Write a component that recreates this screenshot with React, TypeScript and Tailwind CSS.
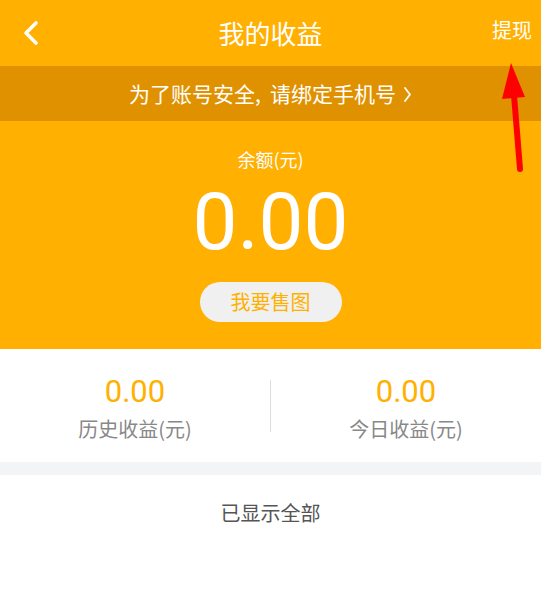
import React from "react";

export default function App() {
  const font = { fontFamily: '"Noto Sans CJK SC", Roboto, sans-serif' };
  return (
    <div className="relative w-[541px] h-[610px] bg-white overflow-hidden" style={font}>
      <div className="bg-[#FFB000]">
        <div className="relative h-[66px] flex items-center justify-center">
          <svg className="absolute left-[22px] top-[20px]" width="18" height="26" viewBox="0 0 18 26">
            <path d="M14 3 L4 13 L14 23" fill="none" stroke="white" strokeWidth="3.6" strokeLinecap="round" strokeLinejoin="round" />
          </svg>
          <div className="text-white text-[26px] leading-none">我的收益</div>
          <div className="absolute right-[9px] top-[20px] text-white text-[20px] leading-none">提现</div>
        </div>
        <div className="h-[55px] bg-[#E09100] flex items-center justify-center text-white text-[21px]">
          <span>为了账号安全</span>
          <span className="mr-[9px]">,</span>
          <span>请绑定手机号</span>
          <svg className="ml-[7px] mt-[2px]" width="9" height="17" viewBox="0 0 9 17">
            <path d="M2 2 L7 8.5 L2 15" fill="none" stroke="white" strokeWidth="1.8" strokeLinecap="round" strokeLinejoin="round" />
          </svg>
        </div>
        <div className="h-[228px] flex flex-col items-center">
          <div className="mt-[29px] text-white text-[18px] leading-none">余额(元)</div>
          <div className="mt-[14px] text-white text-[80px] leading-none" style={{ fontFamily: "Roboto, sans-serif" }}>0.00</div>
          <div className="mt-[20px] w-[142px] h-[40px] rounded-full bg-[#F0F0F0] flex items-center justify-center text-[#FFB000] text-[20px]">我要售图</div>
        </div>
      </div>
      <div className="h-[113px] flex items-center">
        <div className="flex-1 flex flex-col items-center mt-[4px]">
          <div className="text-[#FFB000] text-[31px] leading-none" style={{ fontFamily: "Roboto, sans-serif" }}>0.00</div>
          <div className="mt-[12px] text-[#888] text-[20px] leading-none">历史收益(元)</div>
        </div>
        <div className="w-px h-[52px] bg-[#ddd]" />
        <div className="flex-1 flex flex-col items-center mt-[4px]">
          <div className="text-[#FFB000] text-[31px] leading-none" style={{ fontFamily: "Roboto, sans-serif" }}>0.00</div>
          <div className="mt-[12px] text-[#888] text-[20px] leading-none">今日收益(元)</div>
        </div>
      </div>
      <div className="h-[13px] bg-[#F3F4F6]" />
      <div className="h-[76px] flex items-center justify-center text-[#555] text-[20px]">已显示全部</div>
      <svg className="absolute left-0 top-0" width="541" height="610" viewBox="0 0 541 610">
        <line x1="520" y1="169" x2="514" y2="95" stroke="#FF0000" strokeWidth="6" strokeLinecap="round" />
        <polygon points="511,63 502,99 525,97" fill="#FF0000" />
      </svg>
    </div>
  );
}
